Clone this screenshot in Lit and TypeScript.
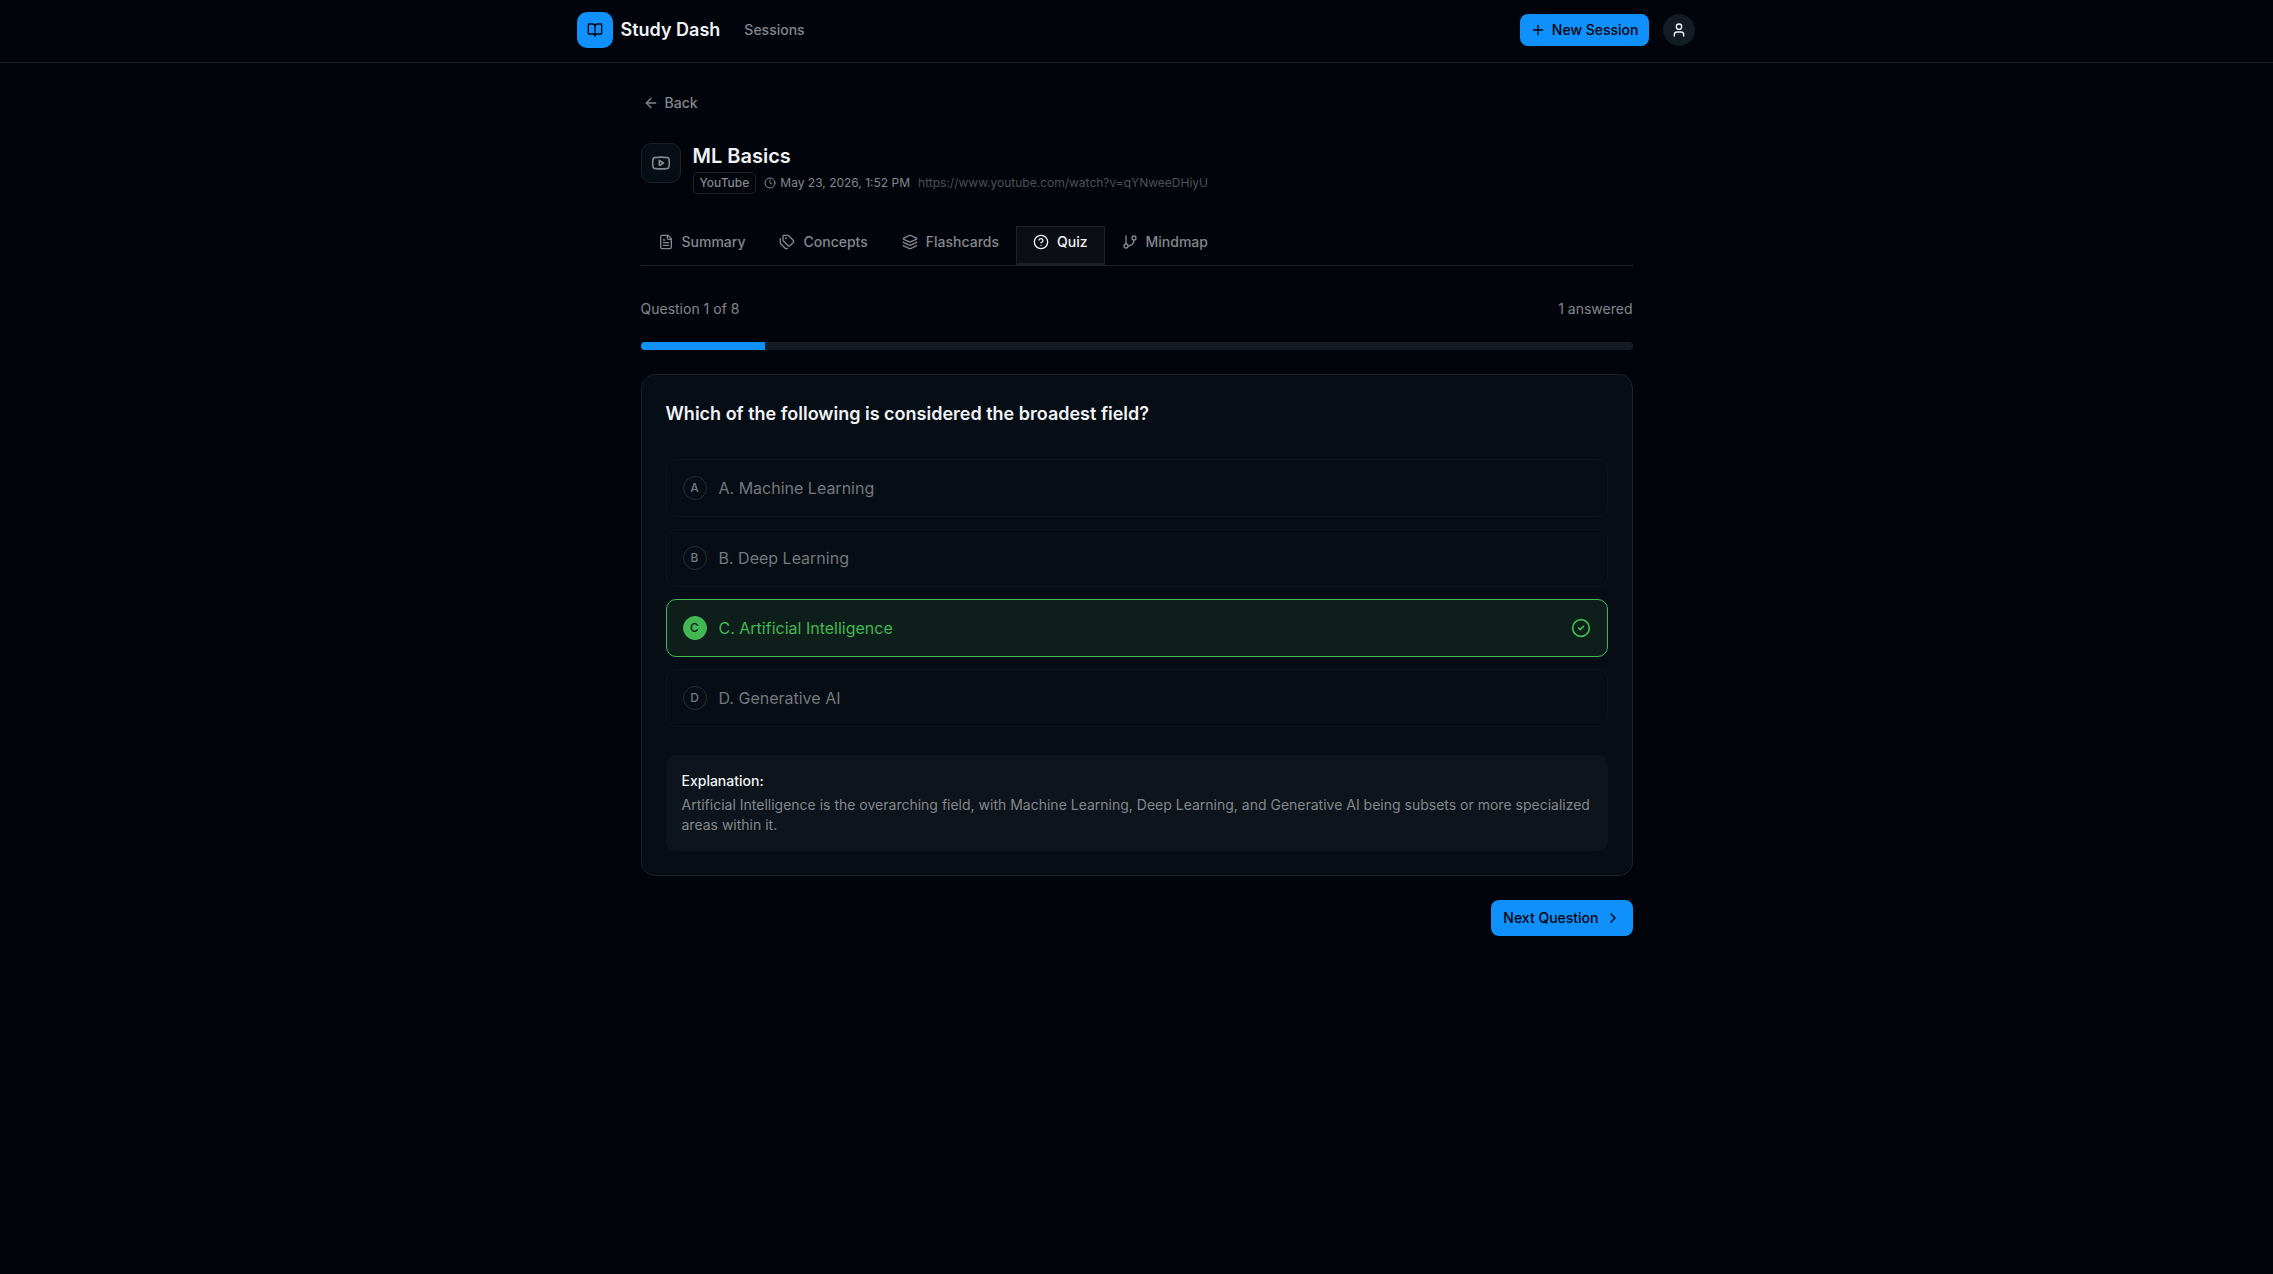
import { LitElement, html, svg, css, nothing } from "lit";
import { customElement, property, state } from "lit/decorators.js";
import { classMap } from "lit/directives/class-map.js";

const icons = {
  book: svg`<path d="M12 7v14"/><path d="M3 18a1 1 0 0 1-1-1V4a1 1 0 0 1 1-1h5a4 4 0 0 1 4 4 4 4 0 0 1 4-4h5a1 1 0 0 1 1 1v13a1 1 0 0 1-1 1h-6a3 3 0 0 0-3 3 3 3 0 0 0-3-3z"/>`,
  plus: svg`<path d="M5 12h14"/><path d="M12 5v14"/>`,
  user: svg`<path d="M19 21v-2a4 4 0 0 0-4-4H9a4 4 0 0 0-4 4v2"/><circle cx="12" cy="7" r="4"/>`,
  back: svg`<path d="m12 19-7-7 7-7"/><path d="M19 12H5"/>`,
  video: svg`<path d="M2.5 17a24.12 24.12 0 0 1 0-10 2 2 0 0 1 1.4-1.4 49.56 49.56 0 0 1 16.2 0A2 2 0 0 1 21.5 7a24.12 24.12 0 0 1 0 10 2 2 0 0 1-1.4 1.4 49.55 49.55 0 0 1-16.2 0A2 2 0 0 1 2.5 17"/><path d="m10 15 5-3-5-3z"/>`,
  clock: svg`<circle cx="12" cy="12" r="10"/><path d="M12 6v6l4 2"/>`,
  file: svg`<path d="M15 2H6a2 2 0 0 0-2 2v16a2 2 0 0 0 2 2h12a2 2 0 0 0 2-2V7Z"/><path d="M14 2v4a2 2 0 0 0 2 2h4"/><path d="M10 9H8"/><path d="M16 13H8"/><path d="M16 17H8"/>`,
  tags: svg`<path d="M13.172 2a2 2 0 0 1 1.414.586l6.71 6.71a2.4 2.4 0 0 1 0 3.408l-4.592 4.592a2.4 2.4 0 0 1-3.408 0l-6.71-6.71A2 2 0 0 1 6 9.172V3a1 1 0 0 1 1-1z"/><path d="M2 7v6.172a2 2 0 0 0 .586 1.414l6.71 6.71a2.4 2.4 0 0 0 3.191.193"/><circle cx="10.5" cy="6.5" r=".5" fill="currentColor"/>`,
  layers: svg`<path d="M12.83 2.18a2 2 0 0 0-1.66 0L2.6 6.08a1 1 0 0 0 0 1.83l8.58 3.91a2 2 0 0 0 1.66 0l8.58-3.9a1 1 0 0 0 0-1.83z"/><path d="M2 12a1 1 0 0 0 .58.91l8.6 3.91a2 2 0 0 0 1.65 0l8.58-3.9A1 1 0 0 0 22 12"/><path d="M2 17a1 1 0 0 0 .58.91l8.6 3.91a2 2 0 0 0 1.65 0l8.58-3.9A1 1 0 0 0 22 17"/>`,
  help: svg`<circle cx="12" cy="12" r="10"/><path d="M9.09 9a3 3 0 0 1 5.83 1c0 2-3 3-3 3"/><path d="M12 17h.01"/>`,
  branch: svg`<path d="M6 3v12"/><circle cx="18" cy="6" r="3"/><circle cx="6" cy="18" r="3"/><path d="M18 9a9 9 0 0 1-9 9"/>`,
  check: svg`<circle cx="12" cy="12" r="10"/><path d="m9 12 2 2 4-4"/>`,
  next: svg`<path d="m9 18 6-6-6-6"/>`,
};
type IconName = keyof typeof icons;

@customElement("ui-icon")
class UiIcon extends LitElement {
  @property() name: IconName = "plus";
  @property({ type: Number }) size = 16;

  static styles = css`
    :host {
      display: inline-flex;
      flex: none;
    }
    .glyph {
      display: block;
      fill: none;
      stroke: currentColor;
      stroke-width: 2;
      stroke-linecap: round;
      stroke-linejoin: round;
    }
  `;

  render() {
    return html`<svg class="glyph" width=${this.size} height=${this.size} viewBox="0 0 24 24" aria-hidden="true">
      ${icons[this.name]}
    </svg>`;
  }
}

const tabs: { label: string; icon: IconName }[] = [
  { label: "Summary", icon: "file" },
  { label: "Concepts", icon: "tags" },
  { label: "Flashcards", icon: "layers" },
  { label: "Quiz", icon: "help" },
  { label: "Mindmap", icon: "branch" },
];

const question = {
  text: "Which of the following is considered the broadest field?",
  options: ["A. Machine Learning", "B. Deep Learning", "C. Artificial Intelligence", "D. Generative AI"],
  answer: 2,
  explanation:
    "Artificial Intelligence is the overarching field, with Machine Learning, Deep Learning, and Generative AI being subsets or more specialized areas within it.",
};

@customElement("app-root")
class AppRoot extends LitElement {
  @state() private activeTab = "Quiz";
  private current = 1;
  private total = 8;

  static styles = css`
    :host {
      --bg: #02040b;
      --card: #070d14;
      --muted-bg: #151b22;
      --line: #1d2126;
      --text: #f0f3f6;
      --muted: #84878b;
      --primary: #1090fa;
      --on-primary: #02040b;
      --success: #43b852;
      display: block;
      min-height: 100vh;
      background: var(--bg);
      color: var(--text);
      font: 400 14px/20px Inter, "Liberation Sans", sans-serif;
    }
    * {
      box-sizing: border-box;
    }
    button {
      font: inherit;
      color: inherit;
      background: none;
      border: 0;
      padding: 0;
      margin: 0;
      cursor: pointer;
    }
    button:disabled {
      cursor: default;
    }
    a {
      color: inherit;
      text-decoration: none;
    }
    h1,
    h2,
    p {
      margin: 0;
    }
    .topbar {
      border-bottom: 1px solid var(--line);
    }
    .topbar-inner {
      display: flex;
      align-items: center;
      max-width: 1152px;
      margin: 0 auto;
      padding: 12px 18px 14px 16px;
    }
    .brand {
      display: flex;
      align-items: center;
      gap: 8px;
      font-size: 18px;
      line-height: 28px;
      font-weight: 600;
    }
    .logo {
      display: grid;
      place-items: center;
      width: 36px;
      height: 36px;
      border-radius: 10px;
      background: var(--primary);
      color: var(--on-primary);
    }
    .nav {
      flex: 1;
      margin-left: 24px;
      color: var(--muted);
      font-weight: 500;
    }
    .actions {
      display: flex;
      align-items: center;
      gap: 14px;
    }
    .primary {
      display: inline-flex;
      align-items: center;
      gap: 6px;
      border-radius: 8px;
      background: var(--primary);
      color: var(--on-primary);
      font-weight: 500;
    }
    .new {
      height: 32px;
      padding: 0 10px;
    }
    .avatar {
      display: grid;
      place-items: center;
      width: 32px;
      height: 32px;
      border-radius: 50%;
      background: var(--muted-bg);
    }
    .page {
      max-width: 1024px;
      margin: 0 auto;
      padding: 24px 16px;
    }
    .back {
      display: flex;
      align-items: center;
      gap: 6px;
      height: 32px;
      padding: 0 2px;
      color: var(--muted);
      font-weight: 500;
    }
    .session {
      display: flex;
      gap: 12px;
      margin-top: 24px;
    }
    .source {
      display: grid;
      place-items: center;
      width: 40px;
      height: 40px;
      border: 1px solid var(--line);
      border-radius: 10px;
      background: var(--card);
      color: var(--muted);
    }
    .title {
      font-size: 20px;
      line-height: 26px;
      font-weight: 600;
    }
    .meta {
      display: flex;
      align-items: center;
      gap: 8px;
      margin-top: 3px;
      font-size: 12px;
      line-height: 16px;
      color: var(--muted);
    }
    .badge {
      padding: 2px 6px;
      border: 1px solid var(--line);
      border-radius: 4px;
      font-weight: 500;
    }
    .date {
      display: inline-flex;
      align-items: center;
      gap: 4px;
    }
    .link {
      color: #4c5055;
    }
    .tabs {
      display: flex;
      margin-top: 32px;
      border-bottom: 1px solid var(--line);
    }
    .tab {
      display: inline-flex;
      align-items: center;
      gap: 8px;
      height: 39px;
      padding: 0 16px 8px;
      border: 1px solid transparent;
      border-bottom: 0;
      color: var(--muted);
      font-weight: 500;
    }
    .tab.active {
      border-color: var(--line);
      background: #0b0f15;
      box-shadow: inset 0 -2px var(--line);
      color: var(--text);
    }
    .status {
      display: flex;
      justify-content: space-between;
      margin-top: 32px;
      line-height: 22px;
      color: var(--muted);
    }
    .track {
      height: 8px;
      margin-top: 22px;
      border-radius: 4px;
      background: var(--muted-bg);
      overflow: hidden;
    }
    .fill {
      height: 100%;
      background: var(--primary);
    }
    .card {
      margin-top: 24px;
      padding: 24px;
      border: 1px solid var(--line);
      border-radius: 14px;
      background: var(--card);
    }
    .question {
      font-size: 18px;
      line-height: 30px;
      font-weight: 600;
    }
    .options {
      display: grid;
      gap: 12px;
      margin-top: 30px;
    }
    .option {
      display: flex;
      align-items: center;
      gap: 12px;
      height: 58px;
      padding: 0 16px;
      border: 1px solid #0e141a;
      border-radius: 10px;
      color: #74787d;
      font-size: 16px;
      line-height: 24px;
      text-align: left;
    }
    .letter {
      display: grid;
      place-items: center;
      width: 24px;
      height: 24px;
      border: 1px solid #272c31;
      border-radius: 50%;
      font-size: 12px;
      line-height: 16px;
      font-weight: 500;
    }
    .label {
      flex: 1;
    }
    .option.correct {
      border-color: var(--success);
      background: #0d1e1b;
      color: var(--success);
    }
    .correct .letter {
      border-color: var(--success);
      background: var(--success);
      color: #0d1e1b;
    }
    .explanation {
      margin-top: 28px;
      padding: 16px;
      border-radius: 10px;
      background: #0d141b;
      color: var(--muted);
    }
    .heading {
      margin-bottom: 4px;
      color: var(--text);
      font-weight: 500;
    }
    .footer {
      display: flex;
      justify-content: flex-end;
      margin-top: 24px;
    }
    .next {
      height: 36px;
      padding: 0 12px;
    }
  `;

  private renderOption(text: string, index: number) {
    const correct = index === question.answer;
    return html`<button class=${classMap({ option: true, correct })} disabled>
      <span class="letter">${text[0]}</span>
      <span class="label">${text}</span>
      ${correct ? html`<ui-icon name="check" size="20"></ui-icon>` : nothing}
    </button>`;
  }

  render() {
    return html`
      <header class="topbar">
        <div class="topbar-inner">
          <a class="brand" href="#"><span class="logo"><ui-icon name="book"></ui-icon></span>Study Dash</a>
          <nav class="nav"><a href="#sessions">Sessions</a></nav>
          <div class="actions">
            <button class="primary new"><ui-icon name="plus"></ui-icon>New Session</button>
            <button class="avatar" aria-label="Account"><ui-icon name="user"></ui-icon></button>
          </div>
        </div>
      </header>
      <main class="page">
        <button class="back"><ui-icon name="back"></ui-icon>Back</button>
        <section class="session">
          <span class="source"><ui-icon name="video" size="20"></ui-icon></span>
          <div>
            <h1 class="title">ML Basics</h1>
            <div class="meta">
              <span class="badge">YouTube</span>
              <span class="date"><ui-icon name="clock" size="12"></ui-icon>May 23, 2026, 1:52 PM</span>
              <a class="link" href="https://www.youtube.com/watch?v=qYNweeDHiyU">https://www.youtube.com/watch?v=qYNweeDHiyU</a>
            </div>
          </div>
        </section>
        <div class="tabs" role="tablist">
          ${tabs.map(
            (tab) => html`<button
              class=${classMap({ tab: true, active: tab.label === this.activeTab })}
              role="tab"
              aria-selected=${tab.label === this.activeTab ? "true" : "false"}
              @click=${() => (this.activeTab = tab.label)}
            ><ui-icon name=${tab.icon}></ui-icon>${tab.label}</button>`
          )}
        </div>
        <div class="status">
          <span>Question ${this.current} of ${this.total}</span>
          <span>1 answered</span>
        </div>
        <div class="track" role="progressbar" aria-label="Quiz progress" aria-valuenow=${this.current} aria-valuemax=${this.total}>
          <div class="fill" style="width: ${(this.current / this.total) * 100}%"></div>
        </div>
        <section class="card">
          <h2 class="question">${question.text}</h2>
          <div class="options">${question.options.map((text, index) => this.renderOption(text, index))}</div>
          <div class="explanation">
            <p class="heading">Explanation:</p>
            <p>${question.explanation}</p>
          </div>
        </section>
        <div class="footer">
          <button class="primary next">Next Question<ui-icon name="next"></ui-icon></button>
        </div>
      </main>
    `;
  }
}
